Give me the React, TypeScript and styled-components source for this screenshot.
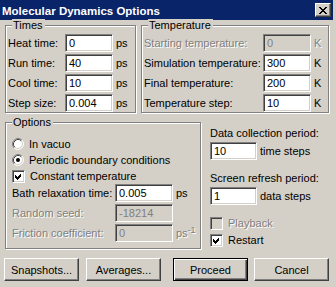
import React from "react";
import styled, { createGlobalStyle, css } from "styled-components";

const GlobalStyle = createGlobalStyle`
  html, body { margin: 0; padding: 0; background: #d4d0c8; }
  body { font-family: "Liberation Sans", Arial, sans-serif; font-size: 11px; color: #000; }
  * { box-sizing: border-box; }
`;

const Window = styled.div`
  width: 336px;
  height: 287px;
  background: #d4d0c8;
  padding-right: 3px;
  display: flex;
  flex-direction: column;
  overflow: hidden;
`;

const TitleBar = styled.div`
  height: 20px;
  background: #0a246a;
  color: #fff;
  font-weight: bold;
  font-size: 11.5px;
  display: flex;
  align-items: center;
  justify-content: space-between;
  padding: 1px 2px 0 2px;
`;

const CloseBtn = styled.div`
  width: 16px;
  height: 14px;
  background: #d4d0c8;
  border: 1px solid;
  border-color: #fff #404040 #404040 #fff;
  box-shadow: inset -1px -1px #808080;
  display: flex;
  align-items: center;
  justify-content: center;
  margin-top: -1px;
`;

const Row = styled.div<{ $top?: number }>`
  display: flex;
  padding-left: 5px;
  margin-top: ${(p) => p.$top ?? 0}px;
`;

const Group = styled.div<{ $w: number; $h: number; $pad: string; $gap?: number }>`
  position: relative;
  width: ${(p) => p.$w}px;
  height: ${(p) => p.$h}px;
  margin-right: ${(p) => p.$gap ?? 0}px;
  border: 1px solid #808080;
  box-shadow: inset 1px 1px #fff, 1px 1px #fff;
  padding: ${(p) => p.$pad};
`;

const Legend = styled.span`
  position: absolute;
  top: -7px;
  left: 6px;
  padding: 0 2px 0 1px;
  line-height: 13px;
  background: #d4d0c8;
`;

const Field = styled.div`
  display: flex;
  align-items: center;
  height: 18px;
  margin-bottom: 2px;
`;

const disabledText = css`
  color: #808080;
  text-shadow: 1px 1px #fff;
`;

const Label = styled.span<{ $w?: number; $off?: boolean }>`
  width: ${(p) => (p.$w ? `${p.$w}px` : "auto")};
  flex-shrink: 0;
  white-space: nowrap;
  line-height: 13px;
  ${(p) => p.$off && disabledText}
`;

const Unit = styled.span<{ $off?: boolean }>`
  margin-left: 3px;
  white-space: nowrap;
  ${(p) => p.$off && disabledText}
  sup {
    font-size: 9px;
    vertical-align: 4px;
    line-height: 0;
  }
`;

const TextBox = styled.input<{ $w: number }>`
  width: ${(p) => p.$w}px;
  height: 18px;
  margin: 0;
  padding: 0 0 0 3px;
  font: inherit;
  color: #000;
  background: #fff;
  border: 1px solid;
  border-color: #808080 #fff #fff #808080;
  box-shadow: inset 1px 1px #404040, inset -1px -1px #d4d0c8;
  outline: none;
  &:disabled {
    background: #d4d0c8;
    color: #808080;
    -webkit-text-fill-color: #808080;
    opacity: 1;
  }
`;

const Choice = styled.div<{ $top?: number }>`
  display: flex;
  align-items: center;
  height: 16px;
  margin-top: ${(p) => p.$top ?? 0}px;
`;

const Box = styled.span<{ $off?: boolean }>`
  width: 13px;
  height: 13px;
  flex-shrink: 0;
  background: ${(p) => (p.$off ? "#d4d0c8" : "#fff")};
  border: 1px solid;
  border-color: #808080 #fff #fff #808080;
  box-shadow: inset 1px 1px #404040, inset -1px -1px #d4d0c8;
  position: relative;
  svg { position: absolute; left: -1px; top: -1px; }
`;

const ChoiceText = styled.span<{ $off?: boolean }>`
  margin-left: 5px;
  white-space: nowrap;
  ${(p) => p.$off && disabledText}
`;

const Side = styled.div`
  margin-left: 9px;
  padding-top: 5px;
  display: flex;
  flex-direction: column;
`;

const SideLabel = styled.div<{ $top?: number }>`
  line-height: 13px;
  margin-top: ${(p) => p.$top ?? 0}px;
  margin-bottom: 2px;
  white-space: nowrap;
`;

const Buttons = styled.div`
  display: flex;
  padding-left: 4px;
  margin-top: 9px;
`;

const Button = styled.div<{ $left?: number; $default?: boolean }>`
  width: 75px;
  height: 23px;
  margin-left: ${(p) => p.$left ?? 0}px;
  display: flex;
  align-items: center;
  justify-content: center;
  background: #d4d0c8;
  border: 1px solid;
  ${(p) =>
    p.$default
      ? css`
          border-color: #000;
          box-shadow: inset 1px 1px #fff, inset -1px -1px #404040, inset -2px -2px #808080;
        `
      : css`
          border-color: #fff #404040 #404040 #fff;
          box-shadow: inset -1px -1px #808080;
        `}
`;

const Check = () => (
  <svg width="13" height="13" viewBox="0 0 13 13" shapeRendering="crispEdges">
    <polygon points="3,5 5,7 9,3 9,6 5,10 3,8" fill="#000" />
  </svg>
);

const Radio = ({ on }: { on?: boolean }) => (
  <svg width="12" height="12" viewBox="0 0 12 12">
    <circle cx="6" cy="6" r="5" fill="#fff" />
    <path d="M2.11 9.89 A5.5 5.5 0 0 1 9.89 2.11" fill="none" stroke="#808080" />
    <path d="M9.89 2.11 A5.5 5.5 0 0 1 2.11 9.89" fill="none" stroke="#fff" />
    <path d="M2.82 9.18 A4.5 4.5 0 0 1 9.18 2.82" fill="none" stroke="#404040" />
    <path d="M9.18 2.82 A4.5 4.5 0 0 1 2.82 9.18" fill="none" stroke="#d4d0c8" />
    {on && <circle cx="6" cy="6" r="2" fill="#000" />}
  </svg>
);

const CheckBox = ({ on, off, label, top }: { on?: boolean; off?: boolean; label: string; top?: number }) => (
  <Choice $top={top}>
    <Box $off={off}>{on && <Check />}</Box>
    <ChoiceText $off={off}>{label}</ChoiceText>
  </Choice>
);

const times = [
  ["Heat time:", "0"],
  ["Run time:", "40"],
  ["Cool time:", "10"],
  ["Step size:", "0.004"],
];

const temps = [
  ["Starting temperature:", "0", true],
  ["Simulation temperature:", "300", false],
  ["Final temperature:", "200", false],
  ["Temperature step:", "10", false],
] as const;

export default function App() {
  return (
    <>
      <GlobalStyle />
      <Window>
        <TitleBar>
          <span>Molecular Dynamics Options</span>
          <CloseBtn>
            <svg width="8" height="7" viewBox="0 0 8 7" shapeRendering="crispEdges">
              <path d="M0 0h2v1h-2zM6 0h2v1h-2zM1 1h2v1h-2zM5 1h2v1h-2zM2 2h4v1h-4zM3 3h2v1h-2zM2 4h4v1h-4zM1 5h2v1h-2zM5 5h2v1h-2zM0 6h2v1h-2zM6 6h2v1h-2z" fill="#000" />
            </svg>
          </CloseBtn>
        </TitleBar>

        <Row $top={5}>
          <Group $w={131} $h={88} $pad="8px 0 0 2px" $gap={5}>
            <Legend>Times</Legend>
            {times.map(([l, v]) => (
              <Field key={l}>
                <Label $w={57}>{l}</Label>
                <TextBox $w={48} value={v} readOnly />
                <Unit>ps</Unit>
              </Field>
            ))}
          </Group>
          <Group $w={188} $h={88} $pad="8px 0 0 2px">
            <Legend>Temperature</Legend>
            {temps.map(([l, v, off]) => (
              <Field key={l}>
                <Label $w={119} $off={off}>{l}</Label>
                <TextBox $w={48} value={v} readOnly disabled={off} />
                <Unit $off={off}>K</Unit>
              </Field>
            ))}
          </Group>
        </Row>

        <Row $top={9}>
          <Group $w={196} $h={127} $pad="13px 0 0 6px">
            <Legend>Options</Legend>
            <Choice>
              <Radio />
              <ChoiceText>In vacuo</ChoiceText>
            </Choice>
            <Choice>
              <Radio on />
              <ChoiceText>Periodic boundary conditions</ChoiceText>
            </Choice>
            <CheckBox on label="Constant temperature" />
            <Field>
              <Label $w={103}>Bath relaxation time:</Label>
              <TextBox $w={58} value="0.005" readOnly />
              <Unit>ps</Unit>
            </Field>
            <Field>
              <Label $w={103} $off>Random seed:</Label>
              <TextBox $w={58} value="-18214" readOnly disabled />
            </Field>
            <Field>
              <Label $w={103} $off>Friction coefficient:</Label>
              <TextBox $w={58} value="0" readOnly disabled />
              <Unit $off>
                ps<sup>-1</sup>
              </Unit>
            </Field>
          </Group>
          <Side>
            <SideLabel>Data collection period:</SideLabel>
            <Field>
              <TextBox $w={47} value="10" readOnly />
              <Unit>time steps</Unit>
            </Field>
            <SideLabel $top={10}>Screen refresh period:</SideLabel>
            <Field>
              <TextBox $w={47} value="1" readOnly />
              <Unit>data steps</Unit>
            </Field>
            <CheckBox off label="Playback" top={8} />
            <CheckBox on label="Restart" top={1} />
          </Side>
        </Row>

        <Buttons>
          <Button>Snapshots...</Button>
          <Button $left={7}>Averages...</Button>
          <Button $left={12} $default>
            Proceed
          </Button>
          <Button $left={6}>Cancel</Button>
        </Buttons>
      </Window>
    </>
  );
}
